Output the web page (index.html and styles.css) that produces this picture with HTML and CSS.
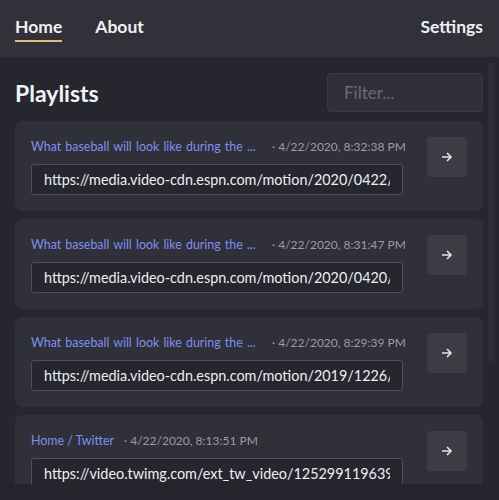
FILE: index.html
```html
<!DOCTYPE html>
<html>
<head>
<meta charset="utf-8">
<link rel="stylesheet" href="styles.css">
</head>
<body>
<header class="topbar">
  <nav class="nav">
    <a class="nav-link active">Home</a>
    <a class="nav-link">About</a>
  </nav>
  <a class="nav-link">Settings</a>
</header>
<main class="main">
  <div class="content">
    <div class="head-row">
      <h1 class="title">Playlists</h1>
      <input class="filter" placeholder="Filter...">
    </div>
    <div class="list">
      <div class="card">
        <div class="card-body">
          <div class="meta"><a class="name clip">What baseball will look like during the ...</a><span class="date">· 4/22/2020, 8:32:38 PM</span></div>
          <input class="url" value="https://media.video-cdn.espn.com/motion/2020/0422/dm_200422_mlb_what_baseball_will_look_like/dm_200422_mlb_what_baseball_will_look_like.m3u8">
        </div>
        <button class="go"><svg width="12" height="12" viewBox="0 0 12 12"><path d="M1 6h9M6 2l4 4-4 4" fill="none" stroke="#e4e4e8" stroke-width="1.6"/></svg></button>
      </div>
      <div class="card">
        <div class="card-body">
          <div class="meta"><a class="name clip">What baseball will look like during the ...</a><span class="date">· 4/22/2020, 8:31:47 PM</span></div>
          <input class="url" value="https://media.video-cdn.espn.com/motion/2020/0420/dm_200420_mlb_baseball_season.m3u8">
        </div>
        <button class="go"><svg width="12" height="12" viewBox="0 0 12 12"><path d="M1 6h9M6 2l4 4-4 4" fill="none" stroke="#e4e4e8" stroke-width="1.6"/></svg></button>
      </div>
      <div class="card">
        <div class="card-body">
          <div class="meta"><a class="name clip">What baseball will look like during the ...</a><span class="date">· 4/22/2020, 8:29:39 PM</span></div>
          <input class="url" value="https://media.video-cdn.espn.com/motion/2019/1226/dm_191226_mlb_highlights.m3u8">
        </div>
        <button class="go"><svg width="12" height="12" viewBox="0 0 12 12"><path d="M1 6h9M6 2l4 4-4 4" fill="none" stroke="#e4e4e8" stroke-width="1.6"/></svg></button>
      </div>
      <div class="card">
        <div class="card-body">
          <div class="meta"><a class="name">Home / Twitter</a><span class="date">· 4/22/2020, 8:13:51 PM</span></div>
          <input class="url" value="https://video.twimg.com/ext_tw_video/1252991196391886848/pu/pl/playlist.m3u8">
        </div>
        <button class="go"><svg width="12" height="12" viewBox="0 0 12 12"><path d="M1 6h9M6 2l4 4-4 4" fill="none" stroke="#e4e4e8" stroke-width="1.6"/></svg></button>
      </div>
    </div>
  </div>
  <div class="track"><div class="thumb"></div></div>
</main>
</body>
</html>
```
FILE: styles.css
```css
html, body {
  margin: 0;
  padding: 0;
  height: 500px;
  overflow: hidden;
  background: #25262d;
  font-family: Lato, "Noto Sans", sans-serif;
  color: #ececf0;
}
.topbar {
  height: 57px;
  box-sizing: border-box;
  background: #303139;
  display: flex;
  align-items: center;
  justify-content: space-between;
  padding: 0 16px 0 15px;
}
.nav {
  display: flex;
  gap: 33px;
}
.nav-link {
  font-weight: 700;
  font-size: 17.5px;
  color: #f0f0f4;
  line-height: 20px;
  padding-top: 2px;
  padding-bottom: 3px;
  border-bottom: 2px solid transparent;
}
.nav-link.active {
  border-bottom-color: #e8b77a;
}
.main {
  height: 427px;
  display: flex;
  background: #25262e;
}
.content {
  flex: 1;
  min-width: 0;
  overflow: hidden;
  padding: 16px 4px 0 15px;
}
.track {
  width: 12px;
  flex: none;
  padding: 5px 5px 0 1px;
  box-sizing: border-box;
}
.thumb {
  height: 300px;
  background: #2d2e36;
  border-radius: 3px;
}
.head-row {
  display: flex;
  align-items: center;
  justify-content: space-between;
  margin-bottom: 9px;
}
.title {
  margin: 0;
  font-size: 23px;
  font-weight: 700;
  color: #f2f2f6;
}
.filter {
  width: 156px;
  height: 39px;
  box-sizing: border-box;
  background: #2f3038;
  border: 1px solid #393a42;
  border-radius: 4px;
  padding: 0 16px;
  font-family: inherit;
  font-size: 17px;
  color: #ddd;
  outline: none;
}
.filter::placeholder {
  color: #6a6b73;
}
.list {
  display: flex;
  flex-direction: column;
  gap: 8px;
}
.card {
  background: #2f3038;
  border-radius: 7px;
  padding: 16px;
  display: flex;
  align-items: flex-start;
  gap: 24px;
}
.card-body {
  flex: 1;
  min-width: 0;
  display: flex;
  flex-direction: column;
  gap: 8px;
}
.meta {
  display: flex;
  align-items: center;
  height: 19px;
  font-size: 12.4px;
  white-space: nowrap;
}
.name {
  color: #7f8ff2;
}
.name.clip {
  width: 231px;
  flex: none;
  word-spacing: 1px;
}
.date {
  color: #9b9ca6;
  font-size: 12px;
  margin-left: 10px;
}
.url {
  height: 31px;
  box-sizing: border-box;
  width: 100%;
  background: #25262e;
  border: 1px solid #4c4d72;
  border-radius: 3px;
  padding: 0 12px;
  font-family: inherit;
  font-size: 14.4px;
  color: #ededf0;
  outline: none;
}
.go {
  width: 40px;
  height: 40px;
  flex: none;
  border: none;
  border-radius: 4px;
  background: #3b3c44;
  display: flex;
  align-items: center;
  justify-content: center;
  padding: 0;
}
```
